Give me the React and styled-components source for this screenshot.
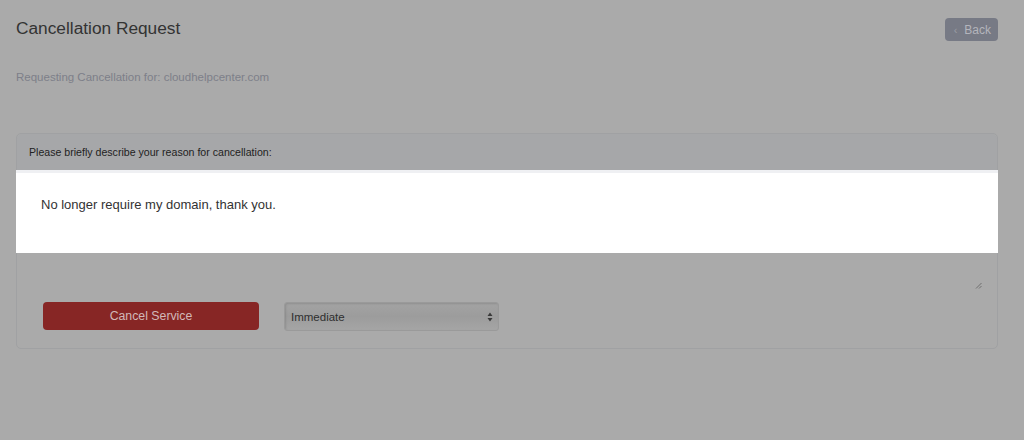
import React from "react";
import styled, { createGlobalStyle } from "styled-components";

const GlobalStyle = createGlobalStyle`
  html, body {
    margin: 0;
    padding: 0;
    background: #aaaaaa;
    font-family: "Liberation Sans", Arial, sans-serif;
  }
`;

const Page = styled.div`
  padding: 16px 26px 0 16px;
  height: 440px;
  box-sizing: border-box;
`;

const TopBar = styled.div`
  display: flex;
  justify-content: space-between;
  align-items: flex-start;
`;

const Title = styled.h1`
  margin: 2px 0 0;
  font-size: 17.3px;
  font-weight: normal;
  color: #333333;
  line-height: 20px;
`;

const BackButton = styled.div`
  display: flex;
  align-items: center;
  gap: 7px;
  height: 23px;
  margin-top: 2px;
  padding: 0 7px 0 9px;
  background: #777a85;
  border-radius: 4px;
  color: #b4b5bc;
  font-size: 12px;
`;

const Chevron = styled.span`
  font-size: 11px;
  color: #9a9ca4;
`;

const Subtitle = styled.p`
  margin: 29px 0 0;
  font-size: 11.5px;
  color: #7d7f89;
  line-height: 14px;
`;

const Panel = styled.div`
  margin-top: 49px;
  border: 1px solid #a0a1a3;
  border-radius: 5px;
`;

const PanelHeader = styled.div`
  height: 36px;
  display: flex;
  align-items: center;
  padding-left: 12px;
  background: #a6a7a9;
  border-radius: 5px 5px 0 0;
  font-size: 10.6px;
  color: #222222;
`;

const Spotlight = styled.div`
  margin: 0 -1px;
  height: 83px;
  background: #ffffff;
  border-top: 3px solid #eff0f3;
  box-sizing: border-box;
  padding: 24px 0 0 25px;
  font-size: 13px;
  color: #333333;
`;

const ResizeRow = styled.div`
  height: 39px;
  display: flex;
  justify-content: flex-end;
  align-items: flex-end;
  padding: 0 15px 3px 0;
  box-sizing: border-box;
`;

const ActionRow = styled.div`
  display: flex;
  gap: 25px;
  padding: 10px 0 17px 26px;
`;

const DangerButton = styled.div`
  width: 216px;
  height: 28px;
  display: flex;
  align-items: center;
  justify-content: center;
  background: #872625;
  border-radius: 4px;
  color: #d2b8b8;
  font-size: 12.3px;
`;

const SelectBox = styled.div`
  width: 215px;
  height: 29px;
  box-sizing: border-box;
  display: flex;
  align-items: center;
  justify-content: space-between;
  padding: 0 5px 0 6px;
  border: 1px solid #9a9a9a;
  border-radius: 3px;
  background: linear-gradient(#a3a3a3, #9c9c9c 50%, #a5a5a5);
  box-shadow: inset 1px 1px 2px rgba(0, 0, 0, 0.12);
  color: #2f2f2f;
  font-size: 11.5px;
`;

const ResizeHandle = () => (
  <svg width="7" height="7" viewBox="0 0 7 7">
    <path d="M1 6.5 L6.5 1 M4 6.5 L6.5 4" stroke="#6f6f6f" strokeWidth="1" />
  </svg>
);

const SelectArrows = () => (
  <svg width="6" height="10" viewBox="0 0 6 10">
    <path d="M3 0.5 L5.5 4 H0.5 Z M3 9.5 L5.5 6 H0.5 Z" fill="#3a3a3a" />
  </svg>
);

const App = () => (
  <>
    <GlobalStyle />
    <Page>
      <TopBar>
        <Title>Cancellation Request</Title>
        <BackButton>
          <Chevron>‹</Chevron>
          Back
        </BackButton>
      </TopBar>
      <Subtitle>Requesting Cancellation for: cloudhelpcenter.com</Subtitle>
      <Panel>
        <PanelHeader>Please briefly describe your reason for cancellation:</PanelHeader>
        <Spotlight>No longer require my domain, thank you.</Spotlight>
        <ResizeRow>
          <ResizeHandle />
        </ResizeRow>
        <ActionRow>
          <DangerButton>Cancel Service</DangerButton>
          <SelectBox>
            Immediate
            <SelectArrows />
          </SelectBox>
        </ActionRow>
      </Panel>
    </Page>
  </>
);

export default App;
